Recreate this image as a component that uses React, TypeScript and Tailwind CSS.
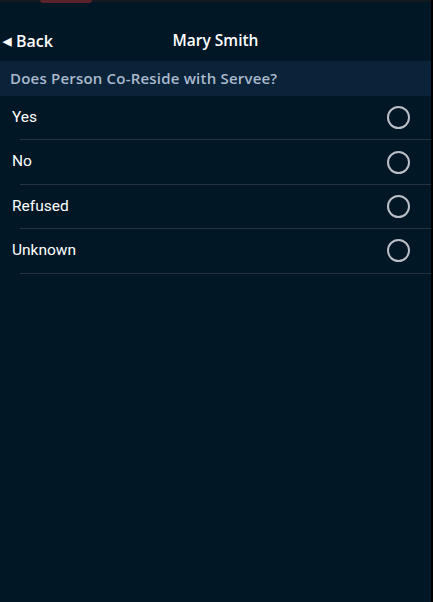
import React from 'react';

const options = ['Yes', 'No', 'Refused', 'Unknown'];

const App: React.FC = () => {
  return (
    <div className="w-[433px] h-[602px] bg-[#011726] border-r-2 border-r-black flex flex-col overflow-hidden">
      {/* Status strip */}
      <div className="h-[2px] bg-[#14191f] flex">
        <div className="ml-[40px] w-[52px] h-[3px] rounded-b-full bg-[#5a2329]"></div>
      </div>

      {/* Nav */}
      <div className="relative h-[59px] pt-[18px] flex items-center">
        <button className="flex items-center gap-[5px] pl-[3px] text-white text-[16px] font-semibold font-['Open_Sans',sans-serif]">
          <span className="text-[11px] leading-none">◀</span>
          Back
        </button>
        <div className="absolute left-0 right-0 top-[18px] bottom-0 flex items-center justify-center pointer-events-none">
          <span className="text-white text-[15.5px] font-semibold font-['Open_Sans',sans-serif]">Mary Smith</span>
        </div>
      </div>

      {/* Section header */}
      <div className="h-[35px] bg-[#0a2339] flex items-center pl-[10px]">
        <span className="text-[#a9b9cd] text-[15px] font-semibold tracking-[0.2px] font-['Open_Sans',sans-serif]">
          Does Person Co-Reside with Servee?
        </span>
      </div>

      {/* Options */}
      <div className="flex flex-col">
        {options.map((opt) => (
          <div key={opt} className="flex flex-col">
            <div className="h-[43.4px] flex items-center justify-between pl-[12px] pr-[21px]">
              <span className="text-white text-[15.5px] font-['Roboto',sans-serif]">{opt}</span>
              <span className="w-[23px] h-[23px] rounded-full border-2 border-[#b9bfc6]"></span>
            </div>
            <div className="ml-[20px] h-px bg-[#24333f]"></div>
          </div>
        ))}
      </div>
    </div>
  );
};

export default App;
